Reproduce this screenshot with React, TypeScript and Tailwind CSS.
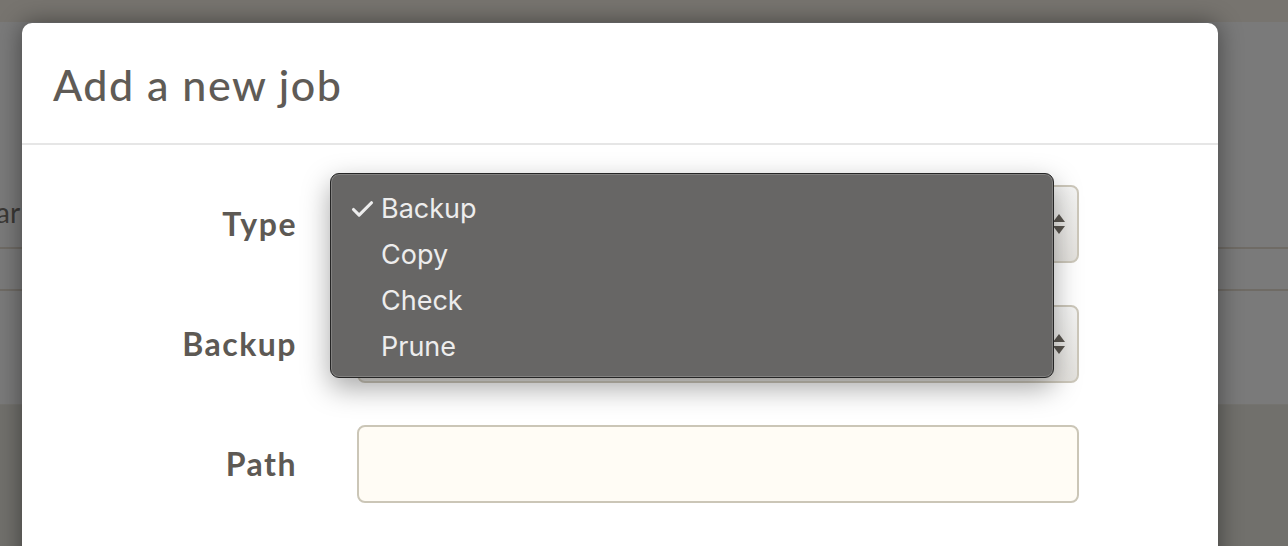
import { Check } from "lucide-react";

const fields = [
  { label: "Type", kind: "select" },
  { label: "Backup", kind: "select" },
  { label: "Path", kind: "input" },
];

const options = ["Backup", "Copy", "Check", "Prune"];

function Arrows() {
  return (
    <svg width="14" height="24" viewBox="0 0 14 24" className="text-[#5a5650]">
      <path d="M7 2 L13 10 L1 10 Z" fill="currentColor" />
      <path d="M1 14 L13 14 L7 22 Z" fill="currentColor" />
    </svg>
  );
}

function Field({ label, kind }: { label: string; kind: string }) {
  return (
    <div className="flex items-center">
      <div className="w-[275px] text-right text-[32px] font-bold tracking-[1.5px] text-[#5d5954]">{label}</div>
      <div className="ml-[60px] w-[722px]">
        {kind === "select" ? (
          <div className="flex h-[78px] items-center justify-end rounded-lg border-2 border-[#cdc8bb] bg-gradient-to-b from-[#f4f4f3] to-[#e4e2de] pr-[11px]">
            <Arrows />
          </div>
        ) : (
          <div className="h-[78px] rounded-lg border-2 border-[#cbc6b7] bg-[#fffcf5]" />
        )}
      </div>
    </div>
  );
}

export default function App() {
  return (
    <div className="relative h-[546px] w-[1288px] overflow-hidden bg-[#7a7a7a] font-['Lato',sans-serif]">
      {/* page behind the overlay */}
      <div className="flex h-full flex-col">
        <div className="h-[22px] bg-[#77746f]" />
        <div className="flex h-[225px] items-end pb-[14px] text-[28px] text-[#3a3835]">
          <span className="-ml-[4px]">ar</span>
        </div>
        <div className="h-[42px] border-t-2 border-[#6f6b65]" />
        <div className="h-[115px] border-t-2 border-[#6f6b65]" />
        <div className="flex-1 border-t border-[#74736f] bg-[#71706c]" />
      </div>

      {/* modal */}
      <div className="absolute left-[22px] top-[23px] h-[560px] w-[1196px] rounded-t-[10px] bg-white shadow-[0_0_24px_rgba(0,0,0,0.45)]">
        <div className="flex h-[122px] items-center border-b-2 border-[#e6e6e6] pl-[31px]">
          <h2 className="pt-[4px] text-[43px] font-medium tracking-[1.5px] text-[#5f5b56]">Add a new job</h2>
        </div>
        <div className="relative flex flex-col gap-[42px] pt-[40px]">
          {fields.map((f) => (
            <Field key={f.label} label={f.label} kind={f.kind} />
          ))}

          {/* native popup menu */}
          <div className="absolute left-[308px] top-[28px] flex h-[205px] w-[724px] flex-col rounded-[9px] border border-[#262626] bg-[#676665] pt-[12px] shadow-[inset_0_0_0_1px_rgba(255,255,255,0.18),0_10px_28px_rgba(0,0,0,0.35)] font-['Inter',sans-serif] text-[27px] text-[#ededed]">
            {options.map((o, i) => (
              <div key={o} className="flex h-[46px] items-center">
                <div className="flex w-[50px] justify-end pr-[5px]">
                  {i === 0 && <Check size={27} strokeWidth={2.8} />}
                </div>
                <span>{o}</span>
              </div>
            ))}
          </div>
        </div>
      </div>
    </div>
  );
}
